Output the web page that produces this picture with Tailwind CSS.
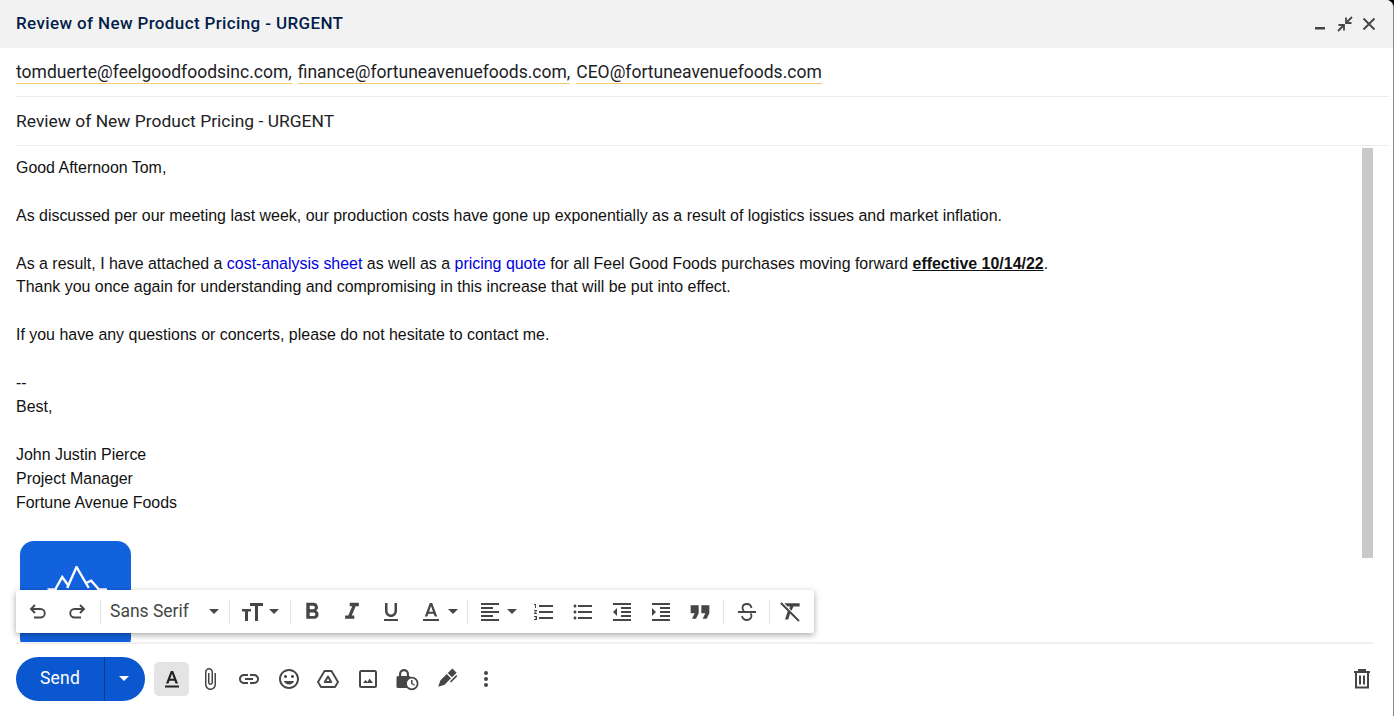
<!DOCTYPE html>
<html>
<head>
<meta charset="utf-8">
<script src="https://cdn.jsdelivr.net/npm/@tailwindcss/browser@4"></script>
</head>
<body class="m-0 bg-black">
<div class="relative w-[1394px] h-[716px] overflow-hidden bg-white rounded-tr-[8px] flex flex-col border-r border-[#8a8a8a]">
  <header class="h-12 shrink-0 bg-[#f2f2f2] flex items-center justify-between pl-4 pr-[16px]">
    <h1 class="font-['Roboto'] text-[17px] tracking-[0.37px] font-medium text-[#041e49]">Review of New Product Pricing - URGENT</h1>
    <div class="flex items-center gap-[8.500px] text-[#444746]">
      <svg class="w-4 h-4" viewBox="0 0 16 16" fill="currentColor"><rect x="3" y="11" width="10" height="2.500"/></svg>
      <svg class="w-4 h-4" viewBox="0 0 16 16" fill="none" stroke="currentColor" stroke-width="1.800"><path d="M15 1 9.500 6.500M9 1.500V7h5.500M1 15l5.500-5.500M1.500 9H7v5.500"/></svg>
      <svg class="w-4 h-4" viewBox="0 0 16 16" fill="none" stroke="currentColor" stroke-width="1.900"><path d="M2.500 2.500l11 11M13.500 2.500l-11 11"/></svg>
    </div>
  </header>
  <div class="mx-4 mr-[4px] h-[49px] shrink-0 border-b border-[#ebebeb] flex items-center gap-[6px] pt-[1px] font-['Roboto'] text-[17.500px] text-[#202124]">
    <span class="border-b border-[#f7c76b] leading-[21px]">tomduerte@feelgoodfoodsinc.com,</span>
    <span class="border-b border-[#f7c76b] leading-[21px]">finance@fortuneavenuefoods.com,</span>
    <span class="border-b border-[#f7c76b] leading-[21px]">CEO@fortuneavenuefoods.com</span>
  </div>
  <div class="mx-4 mr-[4px] h-[49px] shrink-0 border-b border-[#ebebeb] flex items-center pt-[1px] font-['Roboto'] text-[17.400px] tracking-[0.03px] text-[#202124]">Review of New Product Pricing - URGENT</div>
  <main class="relative h-[496px] shrink-0 overflow-hidden pl-4 pt-[9.800px] font-['Liberation_Sans'] text-[15.940px] leading-[23.930px] text-[#111]">
    <p>Good Afternoon Tom,</p>
    <p class="mt-[23.930px]">As discussed per our meeting last week, our production costs have gone up exponentially as a result of logistics issues and market inflation.</p>
    <p class="mt-[23.930px]">As a result, I have attached a <span class="text-[#0000e0]">cost-analysis sheet</span> as well as a <span class="text-[#0000e0]">pricing quote</span> for all Feel Good Foods purchases moving forward <b class="underline">effective 10/14/22</b>.</p>
    <p>Thank you once again for understanding and compromising in this increase that will be put into effect.</p>
    <p class="mt-[23.930px]">If you have any questions or concerts, please do not hesitate to contact me.</p>
    <p class="mt-[23.930px]">--</p>
    <p>Best,</p>
    <p class="mt-[23.930px]">John Justin Pierce</p>
    <p>Project Manager</p>
    <p>Fortune Avenue Foods</p>
    <div class="mt-[26.200px] ml-1 w-[111px] h-[111px] rounded-[14px] bg-[#1261dd] flex justify-center pt-[25px]">
      <svg class="w-[62px] h-[26px]" viewBox="0 0 62 26" fill="none" stroke="#fff" stroke-width="2.400"><path d="M2.500 23.500H12M52 23.500h11.500M10.500 23 17.200 11 23 19M22.200 22 31.500 1 43.800 22M41 17l5.200-2.300 7.300 8.300"/></svg>
    </div>
    <div class="absolute right-[20px] top-[2px] w-[11px] h-[410px] bg-[#c9c9c9]"></div>
  </main>

  <!-- floating formatting toolbar -->
  <div class="absolute left-4 top-[590px] w-[798px] h-[43px] bg-white rounded-[2px] shadow-[0_2px_6px_rgba(0,0,0,0.35)] flex items-center text-[#444746] font-['Roboto']">
    <div class="flex items-center gap-[19px] pl-[12px] pr-[13px]">
      <svg class="w-5 h-5" viewBox="0 0 20 20" fill="none" stroke="currentColor" stroke-width="1.900"><path d="M7 3 3 7l4 4M3 7h9.500a4 4 0 0 1 0 8.500H6"/></svg>
      <svg class="w-5 h-5" viewBox="0 0 20 20" fill="none" stroke="currentColor" stroke-width="1.900"><path d="m13 3 4 4-4 4M17 7H7.500a4 4 0 0 0 0 8.500H14"/></svg>
    </div>
    <div class="w-px h-6 bg-[#e3e3e3]"></div>
    <div class="flex items-center pl-[9px] w-[128px]">
      <span class="text-[17.500px] w-[99px] shrink-0">Sans Serif</span>
      <svg class="w-[10px] h-[5px]" viewBox="0 0 10 5" fill="currentColor"><path d="M0 0h10L5 5z"/></svg>
    </div>
    <div class="w-px h-6 bg-[#e3e3e3]"></div>
    <div class="flex items-center gap-[5px] pl-3 w-[60px]">
      <svg class="w-[22px] h-[22px] shrink-0" viewBox="0 0 22 22" fill="currentColor"><path d="M8 2h13v3h-5v15h-3V5H8zM0 8h9v2.500H6V20H3v-9.500H0z"/></svg>
      <svg class="w-[10px] h-[5px] shrink-0" viewBox="0 0 10 5" fill="currentColor"><path d="M0 0h10L5 5z"/></svg>
    </div>
    <div class="w-px h-6 bg-[#e3e3e3]"></div>
    <div class="flex items-center gap-[15.500px] pl-[9px] w-[176px]">
      <svg class="w-6 h-6 shrink-0" viewBox="1.500 1.500 21 21" fill="currentColor"><path d="M15.600 10.790c.970-.670 1.650-1.770 1.650-2.790 0-2.260-1.750-4-4-4H7v14h7.040c2.090 0 3.710-1.700 3.710-3.790 0-1.520-.860-2.820-2.150-3.420zM10 6.500h3c.830 0 1.500.670 1.500 1.500s-.670 1.500-1.500 1.500h-3v-3zm3.500 9H10v-3h3.500c.830 0 1.500.670 1.500 1.500s-.670 1.500-1.500 1.500z"/></svg>
      <svg class="w-6 h-6 shrink-0" viewBox="1.500 1.500 21 21" fill="currentColor"><path d="M10 4v3h2.210l-3.420 8H6v3h8v-3h-2.210l3.420-8H18V4z"/></svg>
      <svg class="w-6 h-6 shrink-0" viewBox="0 0 24 24" fill="currentColor"><path d="M12 17c3.310 0 6-2.690 6-6V3h-2.500v8c0 1.930-1.570 3.500-3.500 3.500S8.500 12.930 8.500 11V3H6v8c0 3.310 2.690 6 6 6zm-7 2v2h14v-2H5z"/></svg>
      <div class="flex items-center gap-[5px] shrink-0">
        <svg class="w-6 h-6" viewBox="0 0 24 24" fill="currentColor"><path d="M10.800 3 5.800 16.500h2.500l1-2.800h5.400l1 2.800h2.500L13.200 3h-2.400zm-.8 8.700L12 6l2 5.700h-4zM4 19h16v2H4z"/></svg>
        <svg class="w-[10px] h-[5px]" viewBox="0 0 10 5" fill="currentColor"><path d="M0 0h10L5 5z"/></svg>
      </div>
    </div>
    <div class="w-px h-6 bg-[#e3e3e3]"></div>
    <div class="flex items-center gap-[15px] pl-[10px] w-[255px]">
      <div class="flex items-center gap-[5px] w-[39px] shrink-0">
        <svg class="w-6 h-6 shrink-0" viewBox="0 0 24 24" fill="currentColor"><path d="M3 3h18v2H3zM3 7h12v2H3zM3 11h18v2H3zM3 15h12v2H3zM3 19h18v2H3z"/></svg>
        <svg class="w-[10px] h-[5px] shrink-0" viewBox="0 0 10 5" fill="currentColor"><path d="M0 0h10L5 5z"/></svg>
      </div>
      <svg class="w-6 h-6 shrink-0" viewBox="0 0 24 24" fill="currentColor"><path d="M2 17h2v.500H3v1h1v.500H2v1h3v-4H2v1zm1-9h1V4H2v1h1v3zm-1 3h1.800L2 13.100v.900h3v-1H3.200L5 10.900V10H2v1zm5-6v2h14V5H7zm0 14h14v-2H7v2zm0-6h14v-2H7v2z"/></svg>
      <svg class="w-6 h-6 shrink-0" viewBox="0 0 24 24" fill="currentColor"><path d="M4 10.500c-.830 0-1.500.670-1.500 1.500s.670 1.500 1.500 1.500 1.500-.670 1.500-1.500-.670-1.500-1.500-1.500zm0-6c-.830 0-1.500.670-1.500 1.500S3.170 7.500 4 7.500 5.500 6.830 5.500 6 4.830 4.500 4 4.500zm0 12c-.830 0-1.500.680-1.500 1.500s.680 1.500 1.500 1.500 1.500-.680 1.500-1.500-.670-1.500-1.500-1.500zM7 19h14v-2H7v2zm0-6h14v-2H7v2zm0-8v2h14V5H7z"/></svg>
      <svg class="w-6 h-6 shrink-0" viewBox="0 0 24 24" fill="currentColor"><path d="M11 17h10v-2H11v2zm-8-5 4 4V8l-4 4zm0 9h18v-2H3v2zM3 3v2h18V3H3zm8 6h10V7H11v2zm0 4h10v-2H11v2z"/></svg>
      <svg class="w-6 h-6 shrink-0" viewBox="0 0 24 24" fill="currentColor"><path d="M3 21h18v-2H3v2zM3 8v8l4-4-4-4zm8 9h10v-2H11v2zM3 3v2h18V3H3zm8 6h10V7H11v2zm0 4h10v-2H11v2z"/></svg>
      <svg class="w-6 h-6 shrink-0" viewBox="3 3 18 18" fill="currentColor"><path d="M6 17h3l2-4V7H5v6h3zm8 0h3l2-4V7h-6v6h3z"/></svg>
    </div>
    <div class="w-px h-6 bg-[#e3e3e3]"></div>
    <div class="pl-[11px] w-[45px]">
      <svg class="w-6 h-6" viewBox="0 0 24 24" fill="none" stroke="currentColor" stroke-width="1.800"><path d="M3 12h18M16.500 8C16 5.500 14 4 12 4 9 4 7.500 6 7.500 8c0 1 .500 2 1.500 3M15.500 13.500c1 1 1 2 1 2.500 0 2-2 4-4.500 4s-4.500-1.500-5-4"/></svg>
    </div>
    <div class="w-px h-6 bg-[#e3e3e3]"></div>
    <div class="pl-[8px]">
      <svg class="w-[26px] h-[26px]" viewBox="0 0 24 24" fill="currentColor"><path d="M3.270 3 2 4.270l6.970 6.970L6.500 19h3l1.570-5.660L18.730 21 20 19.730 3.550 3.270zM6 4v.180L8.820 7h2.400l-.720 1.680 2.100 2.100L14.210 7H20V4H6z"/></svg>
    </div>
  </div>

  <!-- bottom action bar -->
  <footer class="mr-[20px] ml-4 flex-1 border-t-2 border-[#f0f0f0] flex items-center justify-between text-[#444746] pb-[3px]">
    <div class="flex items-center">
      <div class="w-[129px] h-11 rounded-full bg-[#0b57d0] flex items-center text-white font-['Roboto'] text-[17.500px]">
        <span class="w-[89px] h-full flex items-center justify-center border-r border-[#0a3a8a] tracking-[0.2px]">Send</span>
        <svg class="ml-[14px] w-[10px] h-[5px]" viewBox="0 0 10 5" fill="#fff"><path d="M0 0h10L5 5z"/></svg>
      </div>
      <div class="ml-[9px] w-[35px] h-[34px] bg-[#e4e4e4] rounded-[5px] flex items-center justify-center text-[#202124]">
        <svg class="w-6 h-6" viewBox="0 0 24 24" fill="currentColor"><path d="M10.800 4 6 16.500h2.500l1-2.800h5l1 2.800H18L13.200 4h-2.400zm-.6 7.700L12 6.800l1.800 4.900h-3.600zM5 18.500h14v2H5z"/></svg>
      </div>
      <div class="flex items-center gap-[15.400px] ml-[9px]">
        <svg class="w-6 h-6" viewBox="0 0 24 24" fill="currentColor"><path d="M16.500 6v11.500c0 2.210-1.790 4-4 4s-4-1.790-4-4V5c0-1.380 1.120-2.500 2.500-2.500s2.500 1.120 2.500 2.500v10.500c0 .550-.450 1-1 1s-1-.450-1-1V6H10v9.500c0 1.380 1.120 2.500 2.500 2.500s2.500-1.120 2.500-2.500V5c0-2.210-1.790-4-4-4S7 2.790 7 5v12.500c0 3.040 2.460 5.500 5.500 5.500s5.500-2.460 5.500-5.500V6h-1.500z"/></svg>
        <svg class="w-6 h-6" viewBox="0 0 24 24" fill="currentColor"><path d="M3.900 12c0-1.710 1.390-3.100 3.100-3.100h4V7H7c-2.760 0-5 2.240-5 5s2.240 5 5 5h4v-1.900H7c-1.710 0-3.100-1.390-3.100-3.100zM8 13h8v-2H8v2zm9-6h-4v1.900h4c1.710 0 3.100 1.390 3.100 3.100s-1.390 3.100-3.100 3.100h-4V17h4c2.760 0 5-2.240 5-5s-2.240-5-5-5z"/></svg>
        <svg class="w-6 h-6" viewBox="0 0 24 24" fill="currentColor"><path d="M11.990 2C6.470 2 2 6.480 2 12s4.470 10 9.990 10C17.520 22 22 17.520 22 12S17.520 2 11.990 2zM12 20c-4.420 0-8-3.580-8-8s3.580-8 8-8 8 3.580 8 8-3.580 8-8 8zm3.500-9c.830 0 1.500-.670 1.500-1.500S16.330 8 15.500 8 14 8.670 14 9.500s.670 1.500 1.500 1.500zm-7 0c.830 0 1.500-.670 1.500-1.500S9.330 8 8.500 8 7 8.670 7 9.500 7.670 11 8.500 11zm3.500 6.500c2.330 0 4.310-1.460 5.110-3.500H6.890c.800 2.040 2.780 3.500 5.110 3.500z"/></svg>
        <svg class="w-6 h-6" viewBox="0 0 24 24" fill="none" stroke="currentColor" stroke-width="1.900" stroke-linejoin="round"><path d="M8.500 4h7L22 15l-3 5H5l-3-5zM12 9.500l-3.200 5.500h6.400z"/></svg>
        <svg class="w-6 h-6" viewBox="0 0 24 24" fill="none" stroke="currentColor" stroke-width="2"><rect x="4" y="4" width="16" height="16" rx="1.500"/><path fill="currentColor" stroke="none" d="M7 16l2.500-3 2 2 2-3.500L17 16z"/></svg>
        <svg class="w-6 h-6" viewBox="0 0 24 24" fill="currentColor"><rect x="1.500" y="9" width="14" height="12" rx="1.500"/><path d="M4 10V7a5 5 0 0 1 10 0v3h-2.200V7a2.800 2.800 0 0 0-5.600 0v3z"/><circle cx="16.800" cy="16.500" r="5.800" fill="#fff" stroke="currentColor" stroke-width="1.800"/><path d="M16 13h1.500v3.200l2.500 1.500-.7 1.100-3.300-2z"/></svg>
        <svg class="w-6 h-6" viewBox="0 0 24 24" fill="currentColor"><g transform="rotate(45 12 12)"><path d="M9 8h6v9l-3 6-3-6zM9 0h6v6.500H9zM16.500 2h1.600v9h-1.600z"/></g></svg>
        <svg class="w-6 h-6" viewBox="0 0 24 24" fill="currentColor"><circle cx="12" cy="6" r="2"/><circle cx="12" cy="12" r="2"/><circle cx="12" cy="18" r="2"/></svg>
      </div>
    </div>
    <svg class="w-6 h-6 mr-[-1px]" viewBox="0 0 24 24" fill="none" stroke="currentColor" stroke-width="2"><path d="M4 5h16M9 5V3h6v2M6 5v15.500h12V5M10 8.500v9M14 8.500v9"/></svg>
  </footer>
</div>
</body>
</html>
